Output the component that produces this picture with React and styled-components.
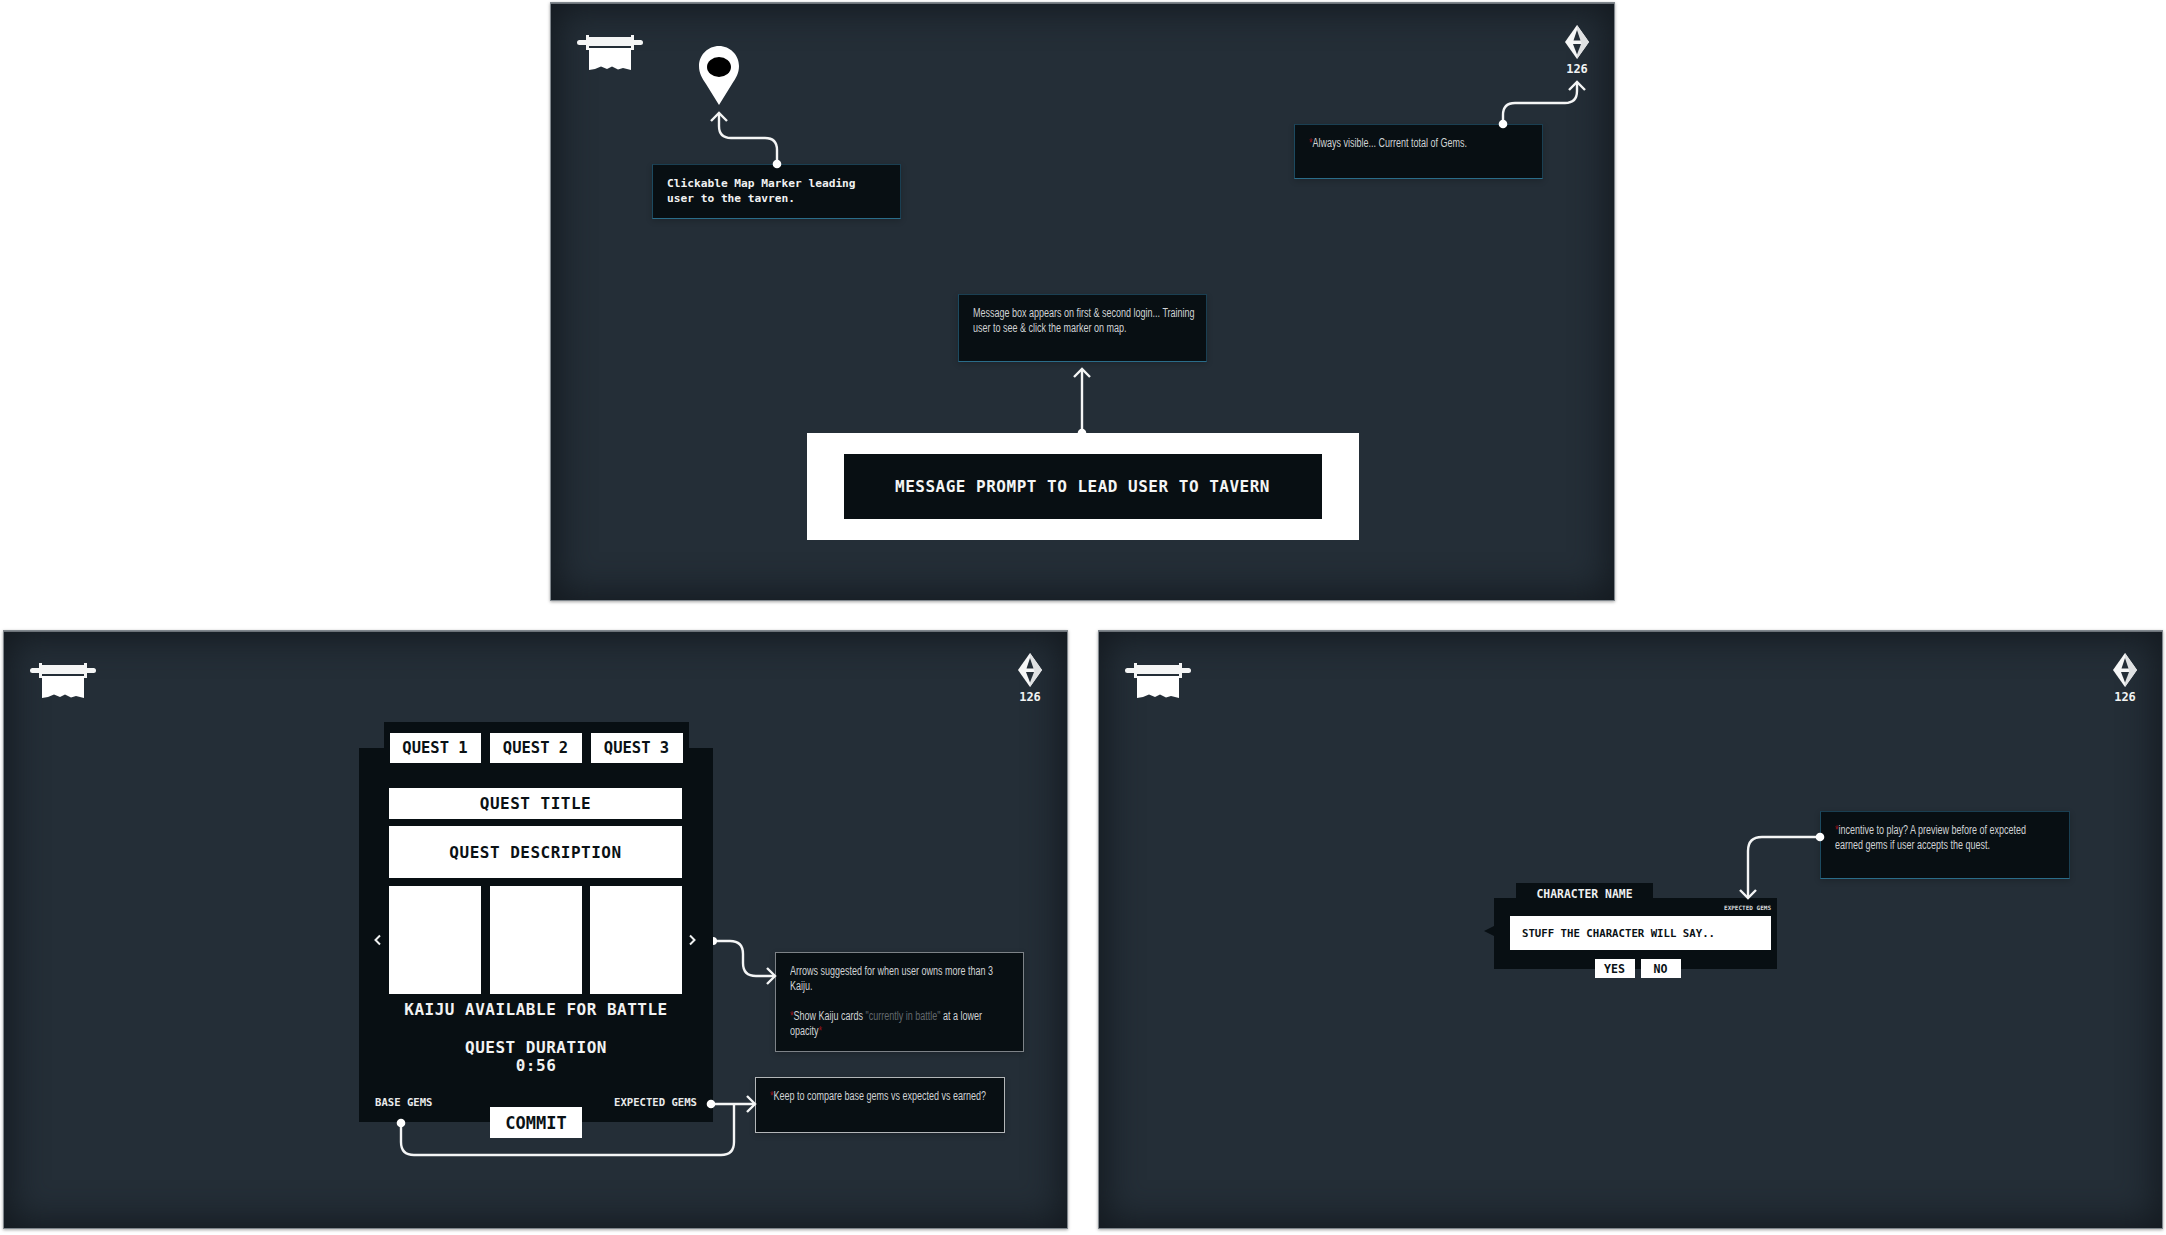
import React from "react";
import styled, { createGlobalStyle, css } from "styled-components";

const GlobalStyle = createGlobalStyle`
  html, body {
    margin: 0;
    background: #fff;
  }
`;

const pixelFont = css`
  font-family: "DejaVu Sans Mono", "Liberation Mono", monospace;
  font-weight: 700;
`;

const Page = styled.div`
  width: 2166px;
  height: 1235px;
  padding-top: 2px;
  box-sizing: border-box;
  display: flex;
  flex-direction: column;
  gap: 29px;
  overflow: hidden;
`;

const TopRow = styled.div`
  display: flex;
  justify-content: center;
  padding-right: 1px;
`;

const BottomRow = styled.div`
  display: flex;
  gap: 30px;
  padding-left: 3px;
`;

const Board = styled.section`
  position: relative;
  width: 1065px;
  height: 599px;
  flex: none;
  display: flex;
  flex-direction: column;
  background: #242e37;
  box-shadow:
    inset 0 0 0 1px #7f868c,
    inset 0 1px 0 1px #6d7379,
    inset 0 0 34px 8px #141a20,
    0 1px 3px rgba(0, 0, 0, 0.35);
`;

const Header = styled.header`
  height: 80px;
  flex: none;
  box-sizing: border-box;
  padding: 33px 26px 0 27px;
  display: flex;
  justify-content: space-between;
  align-items: flex-start;
`;

const GemBlock = styled.div`
  margin-top: -10px;
  width: 24px;
  display: flex;
  flex-direction: column;
  align-items: center;
  color: #f2f3f3;
  ${pixelFont}
  font-size: 12px;
  line-height: 14px;
  gap: 3px;
`;

const Overlay = styled.svg`
  position: absolute;
  inset: 0;
  z-index: 3;
  pointer-events: none;
`;

const Pin = styled.svg`
  position: absolute;
  left: 149px;
  top: 44px;
`;

const tones = {
  teal: css`
    border-color: #1a3f52 #1a3f52 #2a6c89 #1c4a60;
  `,
  gray: css`
    border-color: #7d8287;
  `,
  light: css`
    border-color: #b3b6b8;
  `,
};

const Note = styled.div`
  position: absolute;
  z-index: 2;
  left: ${(p) => p.$x}px;
  top: ${(p) => p.$y}px;
  width: ${(p) => p.$w}px;
  height: ${(p) => p.$h}px;
  box-sizing: border-box;
  padding: 11px 14px;
  background: #080f13;
  border: 1px solid;
  ${(p) => tones[p.$tone || "teal"]}
  box-shadow: 0 2px 6px rgba(0, 0, 0, 0.2);
  color: #d0d3d5;
  white-space: nowrap;
`;

// no condensed family is installed, so the regular sans is squeezed sideways
const NoteText = styled.div`
  font-family: "Liberation Sans", sans-serif;
  font-size: 12px;
  line-height: 15px;
  transform: scaleX(0.75);
  transform-origin: 0 0;
`;

const PixelText = styled.div`
  ${pixelFont}
  font-size: 11.2px;
  line-height: 15px;
  color: #f1f2f2;
`;

const Star = styled.span`
  color: #a01218;
`;

const Dim = styled.span`
  color: #62686d;
`;

const Prompt = styled.div`
  align-self: center;
  margin-top: 351px;
  width: 552px;
  height: 107px;
  box-sizing: border-box;
  padding: 21px 37px 21px 37px;
  background: #fff;
`;

const PromptText = styled.div`
  height: 65px;
  display: flex;
  align-items: center;
  justify-content: center;
  background: #080f13;
  color: #f4f5f5;
  ${pixelFont}
  font-size: 16px;
  letter-spacing: 0.5px;
`;

const Quest = styled.div`
  margin: 12px 0 0 356px;
  width: 354px;
  display: flex;
  flex-direction: column;
  align-items: center;
`;

const QuestTop = styled.div`
  width: 305px;
  height: 26px;
  box-sizing: border-box;
  padding: 11px 6px 0;
  background: #080f13;
  position: relative;
  z-index: 1;
`;

const whiteBox = css`
  display: flex;
  align-items: center;
  justify-content: center;
  flex: none;
  background: #fff;
  color: #0a1115;
  ${pixelFont}
`;

const Tabs = styled.div`
  display: grid;
  grid-template-columns: 91px 92px 92px;
  gap: 9px;
`;

const Tab = styled.div`
  ${whiteBox}
  height: 30px;
  font-size: 15.5px;
`;

const QuestBody = styled.div`
  align-self: stretch;
  box-sizing: border-box;
  padding-top: 40px;
  display: flex;
  flex-direction: column;
  background: #080f13;
`;

const TitleBar = styled.div`
  ${whiteBox}
  margin: 0 31px 0 30px;
  height: 31px;
  font-size: 16px;
  letter-spacing: 0.5px;
`;

const Description = styled(TitleBar)`
  margin-top: 7px;
  height: 52px;
`;

const Carousel = styled.div`
  margin-top: 8px;
  height: 108px;
  flex: none;
  display: grid;
  grid-template-columns: 30px 1fr 31px;
`;

const ArrowSlot = styled.div`
  display: flex;
  align-items: center;
  justify-content: ${(p) => (p.$side === "left" ? "flex-end" : "flex-start")};
  padding: 0 ${(p) => (p.$side === "left" ? "7px" : "0")} 0 ${(p) => (p.$side === "left" ? "0" : "6px")};
`;

const Cards = styled.div`
  display: grid;
  grid-template-columns: 92px 92px 92px;
  gap: 8.5px;
`;

const Card = styled.div`
  background: #fff;
`;

const QuestLabel = styled.div`
  color: #f1f2f2;
  ${pixelFont}
  font-size: 16px;
  line-height: 18px;
  letter-spacing: 0.5px;
  text-align: center;
  margin-top: ${(p) => p.$top}px;
`;

const GemLabels = styled.div`
  margin-top: 21px;
  padding: 0 16px;
  display: flex;
  justify-content: space-between;
  color: #e9eaea;
  ${pixelFont}
  font-size: 10.6px;
  line-height: 12px;
`;

const Commit = styled.div`
  ${whiteBox}
  align-self: center;
  margin: -1px 0 -16px;
  width: 92px;
  height: 31px;
  font-size: 17px;
  position: relative;
  z-index: 1;
`;

const Dialog = styled.div`
  margin: 173px 0 0 396px;
  width: 283px;
  display: flex;
  flex-direction: column;
`;

const DialogTab = styled.div`
  margin-left: 22px;
  width: 137px;
  height: 15px;
  box-sizing: border-box;
  padding-top: 4px;
  background: #080f13;
  color: #eef0f0;
  ${pixelFont}
  font-size: 11.4px;
  line-height: 14px;
  text-align: center;
`;

const DialogBody = styled.div`
  position: relative;
  height: 71px;
  box-sizing: border-box;
  padding: 5px 6px 0 16px;
  background: #080f13;
  display: flex;
  flex-direction: column;
  &::before {
    content: "";
    position: absolute;
    left: -10px;
    top: 28px;
    border-style: solid;
    border-width: 5px 10px 5px 0;
    border-color: transparent #080f13 transparent transparent;
  }
`;

const TinyLabel = styled.div`
  height: 10px;
  color: #d9dcdd;
  ${pixelFont}
  font-size: 6px;
  line-height: 10px;
  text-align: right;
`;

const Speech = styled.div`
  ${whiteBox}
  justify-content: flex-start;
  margin-top: 3px;
  height: 34px;
  padding-left: 12px;
  font-size: 10.7px;
`;

const Choices = styled.div`
  margin-top: 9px;
  padding-right: 6px;
  display: flex;
  justify-content: center;
  gap: 6px;
`;

const Choice = styled.div`
  ${whiteBox}
  width: 40px;
  height: 19px;
  font-size: 11.6px;
`;

function ScrollIcon() {
  return (
    <svg width="66" height="35" viewBox="0 0 66 35">
      <rect x="0" y="5" width="66" height="5" rx="2.5" fill="#f4f5f5" />
      <rect x="9" y="0" width="3" height="15" fill="#f4f5f5" />
      <rect x="54" y="0" width="3" height="15" fill="#f4f5f5" />
      <rect x="12" y="2" width="42" height="9" fill="#f4f5f5" />
      <path d="M12 13H54V35L46 33L41 34.5L35 31.5L30 34L24 31.5L18 34L12 35Z" fill="#fff" />
    </svg>
  );
}

function GemIcon() {
  return (
    <svg width="24" height="34" viewBox="0 0 24 34">
      <path d="M12 0L24 17L12 34L0 17Z" fill="#f6f7f7" />
      <path d="M12 0L24 17L12 34V19H16.5L12 5Z" fill="#dfe1e2" />
      <path d="M12 5L8.5 15.5H15.5Z" fill="#242e37" />
      <path d="M8 19L12 29.5L16 19Z" fill="#242e37" />
    </svg>
  );
}

function Gem() {
  return (
    <GemBlock>
      <GemIcon />
      126
    </GemBlock>
  );
}

function Chevron({ flip }) {
  return (
    <svg width="8" height="12" viewBox="0 0 8 12">
      <path
        d={flip ? "M2 1.5L6.5 6L2 10.5" : "M6 1.5L1.5 6L6 10.5"}
        fill="none"
        stroke="#eef0f0"
        strokeWidth="2"
      />
    </svg>
  );
}

// one overlay per board, the wire lines between the notes and what they point at
function Wires({ lines, dots, children }) {
  return (
    <Overlay width="1065" height="599" viewBox="0 0 1065 599">
      {lines.map((d) => (
        <path key={d} d={d} fill="none" stroke="#f4f5f5" strokeWidth="2.4" />
      ))}
      {dots.map(([cx, cy]) => (
        <circle key={cx} cx={cx} cy={cy} r="4.3" fill="#fff" />
      ))}
      {children}
    </Overlay>
  );
}

function MapBoard() {
  return (
    <Board>
      <Header>
        <ScrollIcon />
        <Gem />
      </Header>
      <Pin width="40" height="59" viewBox="0 0 40 59">
        <path
          d="M20 0C31 0 40 9 40 20C40 27 37 32 33 38L20 59L7 38C3 32 0 27 0 20C0 9 9 0 20 0Z"
          fill="#fff"
        />
        <ellipse cx="20" cy="21" rx="12" ry="10" fill="#000" />
      </Pin>
      <Note $x={102} $y={162} $w={249} $h={55}>
        <PixelText>
          Clickable Map Marker leading
          <br />
          user to the tavren.
        </PixelText>
      </Note>
      <Note $x={744} $y={122} $w={249} $h={55}>
        <NoteText>
          <Star>*</Star>Always visible... Current total of Gems.
        </NoteText>
      </Note>
      <Note $x={408} $y={292} $w={249} $h={68}>
        <NoteText>
          Message box appears on first &amp; second login... Training
          <br />
          user to see &amp; click the marker on map.
        </NoteText>
      </Note>
      <Prompt>
        <PromptText>MESSAGE PROMPT TO LEAD USER TO TAVERN</PromptText>
      </Prompt>
      <Wires
        lines={[
          "M227 162V148Q227 136 215 136H181Q169 136 169 124V111",
          "M161 119L169 111L177 119",
          "M953 122V113Q953 101 965 101H1015Q1027 101 1027 89V80",
          "M1019 88L1027 80L1035 88",
          "M532 431V367",
          "M524 375L532 367L540 375",
        ]}
        dots={[
          [227, 162],
          [953, 122],
          [532, 431],
        ]}
      />
    </Board>
  );
}

function QuestBoard() {
  return (
    <Board>
      <Header>
        <ScrollIcon />
        <Gem />
      </Header>
      <Quest>
        <QuestTop>
          <Tabs>
            <Tab>QUEST 1</Tab>
            <Tab>QUEST 2</Tab>
            <Tab>QUEST 3</Tab>
          </Tabs>
        </QuestTop>
        <QuestBody>
          <TitleBar>QUEST TITLE</TitleBar>
          <Description>QUEST DESCRIPTION</Description>
          <Carousel>
            <ArrowSlot $side="left">
              <Chevron />
            </ArrowSlot>
            <Cards>
              <Card />
              <Card />
              <Card />
            </Cards>
            <ArrowSlot $side="right">
              <Chevron flip />
            </ArrowSlot>
          </Carousel>
          <QuestLabel $top={7}>KAIJU AVAILABLE FOR BATTLE</QuestLabel>
          <QuestLabel $top={20}>
            QUEST DURATION
            <br />
            0:56
          </QuestLabel>
          <GemLabels>
            <span>BASE GEMS</span>
            <span>EXPECTED GEMS</span>
          </GemLabels>
          <Commit>COMMIT</Commit>
        </QuestBody>
      </Quest>
      <Note $x={772} $y={322} $w={249} $h={100} $tone="gray">
        <NoteText>
          Arrows suggested for when user owns more than 3
          <br />
          Kaiju.
          <br />
          <br />
          <Star>*</Star>Show Kaiju cards <Dim>"currently in battle"</Dim> at a lower
          <br />
          opacity<Star>*</Star>
        </NoteText>
      </Note>
      <Note $x={752} $y={447} $w={250} $h={56} $tone="light">
        <NoteText>
          <Star>*</Star>Keep to compare base gems vs expected vs earned?
        </NoteText>
      </Note>
      <Wires
        lines={[
          "M710 311H727Q740 311 740 324V333Q740 346 753 346H772",
          "M764 338L772 346L764 354",
          "M708 474H752",
          "M744 466L752 474L744 482",
          "M398 493V512Q398 525 411 525H718Q731 525 731 512V474",
        ]}
        dots={[
          [708, 474],
          [398, 493],
        ]}
      >
        <path d="M710 307A4 4 0 0 1 710 315Z" fill="#fff" />
      </Wires>
    </Board>
  );
}

function DialogBoard() {
  return (
    <Board>
      <Header>
        <ScrollIcon />
        <Gem />
      </Header>
      <Dialog>
        <DialogTab>CHARACTER NAME</DialogTab>
        <DialogBody>
          <TinyLabel>EXPECTED GEMS</TinyLabel>
          <Speech>STUFF THE CHARACTER WILL SAY..</Speech>
          <Choices>
            <Choice>YES</Choice>
            <Choice>NO</Choice>
          </Choices>
        </DialogBody>
      </Dialog>
      <Note $x={722} $y={181} $w={250} $h={68}>
        <NoteText>
          <Star>*</Star>incentive to play? A preview before of expceted
          <br />
          earned gems if user accepts the quest.
        </NoteText>
      </Note>
      <Wires
        lines={["M722 207H664Q650 207 650 221V268", "M642 260L650 268L658 260"]}
        dots={[[722, 207]]}
      />
    </Board>
  );
}

export default function App() {
  return (
    <Page>
      <GlobalStyle />
      <TopRow>
        <MapBoard />
      </TopRow>
      <BottomRow>
        <QuestBoard />
        <DialogBoard />
      </BottomRow>
    </Page>
  );
}
